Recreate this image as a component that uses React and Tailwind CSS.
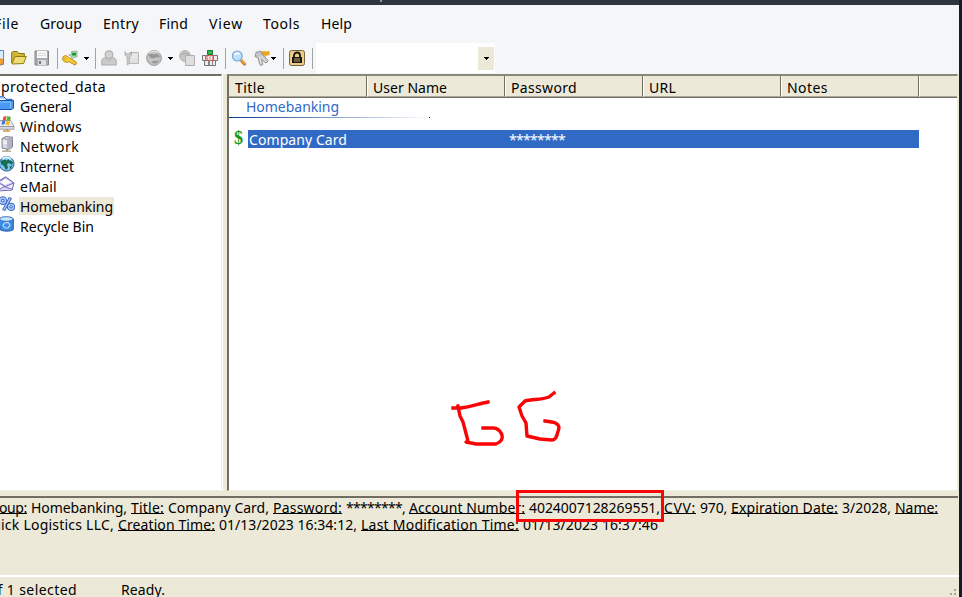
import { useLayoutEffect, useRef } from "react";

// Text run whose tracking is adjusted so that it fills its box exactly.
function Fit({ className = "", children }) {
  const box = useRef(null);
  const run = useRef(null);
  useLayoutEffect(() => {
    const natural = run.current.getBoundingClientRect().width;
    const target = box.current.getBoundingClientRect().width;
    const spacing = (target - natural) / children.length;
    run.current.style.letterSpacing = `${spacing}px`;
  }, [children]);
  return (
    <span ref={box} className={`block shrink-0 whitespace-nowrap ${className}`}>
      <span ref={run} className="inline">{children}</span>
    </span>
  );
}

const Svg = ({ children, className = "" }) => (
  <svg viewBox="0 0 16 16" className={`block h-4 w-4 shrink-0 ${className}`} fill="none">{children}</svg>
);
const Sep = ({ className = "" }) => <div className={`h-[21px] w-px shrink-0 bg-[#a2a3a5] ${className}`} />;
const Caret = ({ className = "" }) => (
  <svg viewBox="0 0 5 3" className={`block h-[3px] w-[5px] shrink-0 ${className}`}><path d="M0 0h5v1H4v1H3v1H2V2H1V1H0z" fill="#000" /></svg>
);

const NewIcon = () => (
  <Svg className="-ml-3"><path d="M2 .5h13.5v14H2z" fill="#d9ecff" stroke="#4e8ed0" /><path d="m12 8 1 2 2-1-1 3 2 1-3 1-1 2-1-3-3-1 3-1z" fill="#f4a52c" stroke="#d87818" strokeWidth=".7" /></Svg>
);
const OpenIcon = () => (
  <Svg className="ml-[7px]"><path d="M.7 13.2V2.5l1.5-1h4l1.6 2h5.5v3" fill="#d0b735" stroke="#8b7412" /><path d="m1 14 3-7.5h11.3l-2.7 7z" fill="#f0dd72" stroke="#927b17" /></Svg>
);
const SaveIcon = () => (
  <Svg className="ml-[7px]"><path d="M1 1h13.5v14H1z" fill="#a9abad" stroke="#858789" /><path d="M3 1h10v7H3z" fill="#f7f7f7" /><path d="M4 10h8v5H4z" fill="#dedfe0" /><path d="M5 11h2v3H5z" fill="#77797b" /><path d="M4 3.5h8M4 5.5h8" stroke="#ddd" /></Svg>
);
const AddKeyIcon = () => (
  <Svg className="ml-[4px]"><path d="M1 6.8C2.3 5.2 5 5.2 6.2 7.2l8 4.8v2.2l-2.3.8-1.3-2-1.4.2-1-1.5-1.8.2C4.7 12.6 1.4 12.2.7 9.6z" fill="#f8d22c" stroke="#c38716" /><circle cx="3" cy="8.6" r="1" fill="#fff2a0" stroke="#b27811" strokeWidth=".6" /><path d="M9.5 1.5 15 1v6h-2.4L10 9.5l-.3-2.6L6.8 5l2.7-1z" fill="#a9dcb3" stroke="#8cab91" strokeWidth=".8" /><path d="M10 2.8h4v2.7h-4z" fill="#1b9a3d" /></Svg>
);
const UserIcon = () => (
  <Svg className="ml-[5px]"><path d="M.8 15v-4C.8 8.8 2.4 8 4.5 7.6h7c2.1.4 3.7 1.2 3.7 3.4v4z" fill="#cbcbcb" stroke="#aaa" /><circle cx="8" cy="4.6" r="4" fill="#d1d1d1" stroke="#aaa" /><path d="m5 9 3 2 3-2" stroke="#b8b8b8" /></Svg>
);
const NoteKeyIcon = () => (
  <Svg className="ml-[7px]"><path d="M5.5 2.5h9v11h-9z" fill="#e1e1e1" stroke="#b8b8b8" /><path d="M1 1.5V5l2.2 2.2V15l2-1.5v-6L7.5 5V1.5L6 4H2.5z" fill="#cfcfcf" stroke="#b0b0b0" /><path d="M8 5h5M8 7h5" stroke="#eee" /></Svg>
);
const GreyGlobe = () => (
  <Svg className="ml-[6px]"><circle cx="8" cy="8" r="7.4" fill="#bfbfbf" stroke="#a0a0a0" /><path d="M2 5 5 3.5l3 1 3-1 3 3-2 1-2-.5-2 1.5-3-.5L3.5 6.5zm4 6 4-1 3 .5-2 2.5-4 .5z" fill="#969696" /><path d="M3.5 3C6 1 10 1 12.5 3" stroke="#e2e2e2" strokeWidth="1.4" /><path d="M3 10h9" stroke="#d4d4d4" /></Svg>
);
const CopyIcon = () => (
  <Svg className="ml-[6px]"><circle cx="6" cy="6" r="5.4" fill="#c5c5c5" stroke="#b0b0b0" /><path d="m2 5 3-2 4 1 2 2" stroke="#a5a5a5" /><path d="M6.5 5.5h9v10h-9z" fill="#dedede" stroke="#b0b0b0" /></Svg>
);
const GridIcon = () => (
  <Svg className="ml-[7px]"><path d="M.5 5.5h15v5H.5zM2.5 10.5h11v5h-11z" fill="#eee" stroke="#777" /><path d="M3.5 5.5v5m4-5v10m4-10v5m-5 0v5m4-5v5" stroke="#858585" /><path d="M5 5.5h6v5H5z" fill="#f7dddd" stroke="#e34a4a" /><path d="M5.5.5h5v4h-5z" fill="#35b64d" stroke="#128029" /><path d="M8 5v6" stroke="#aaa" /></Svg>
);
const FindIcon = () => (
  <Svg className="ml-[5px]"><path d="m10 10 3.5 4" stroke="#c57a31" strokeWidth="3.2" strokeLinecap="round" /><path d="m10 9.5 4 4" stroke="#ffb14b" strokeWidth="1.5" /><circle cx="6.3" cy="6" r="4.9" fill="#bde1fb" stroke="#7fadd9" strokeWidth="1.3" /><path d="M3.5 5c1-2 3-2 5-1" stroke="#fff" strokeWidth="1.8" /></Svg>
);
const KeysIcon = () => (
  <Svg className="ml-[7px]"><path d="M5 2.3h9.5v2h-2l-1 1-1-1H7" stroke="#e7a820" strokeWidth="2.1" /><path d="M2 2.5 6.5 1 8 4l6 6.5-1 2-2 .2L7.5 9l1.3 5.5-2 1L5.5 14 4.3 8 1 6.5z" fill="#c9c9c9" stroke="#8c8c8c" strokeWidth=".9" /><circle cx="3.8" cy="4.5" r="1.2" fill="#fff" stroke="#8c8c8c" strokeWidth=".6" /><path d="m5.5 7 1.6 6.5M7 6.5l5 5" stroke="#f2f2f2" strokeWidth=".8" /></Svg>
);
const LockIcon = () => (
  <Svg className="ml-[5px]"><rect x=".5" y=".5" width="15" height="15" rx="2" fill="#edcc83" stroke="#776342" /><path d="M5 7V5.5a3 3 0 0 1 6 0V7" stroke="#171717" strokeWidth="1.8" /><path d="M3 7h10v6H3z" fill="#171717" /><path d="M5 9h6M5 11h6" stroke="#d9b66c" strokeWidth=".9" /></Svg>
);

const treeIcons = {
  folder: <><path d="M-1 2.5V.8h6l2 2.5h6V5" fill="#c3e1ff" stroke="#1d57ba" /><path d="M-1 4.5h15.5V12L13 13.5H-1z" fill="#4a9af5" stroke="#1553b8" /><path d="M0 6h11.5v6" stroke="#8cc2ff" /></>,
  windows: <><path d="M1.5 4.5h10l3.5 6H-2z" fill="#eeeef3" stroke="#9b9ba9" /><path d="M-2 10.5h17v2.8H-2z" fill="#d6d7e0" stroke="#8a8a98" strokeWidth=".7" /><path d="M8 13v1.5" stroke="#999" strokeWidth="2" /><path d="M4 15h7" stroke="#d79d45" strokeWidth="1.6" /><path d="m4.5.8 3-.8-.8 4-3.2.7z" fill="#e5482d" /><path d="m8.3 0 3.7 1-1 4-3.6-1z" fill="#55b53c" /><path d="m3.2 5.2 3.2-.6-.8 3.6-3.2.6z" fill="#3975e2" /><path d="m7.2 4.8 3.8 1-1 3.8-3.6-1z" fill="#efbd24" /></>,
  network: <><path d="m3 2.5 4-2 6.5.7v10L9.5 13.5 3 12z" fill="#d6d8e1" stroke="#85889a" /><path d="m3 2.5 6 .7 4.5-2M9 3.2v10" stroke="#9598a8" /><path d="m9.5 3.8 3.5-1.6v8.5l-3.5 2z" fill="#aeb1bf" /><path d="m4 5 4 .6M4 7l4 .6" stroke="#fff" /><path d="M8 13v2" stroke="#999" strokeWidth="2" /><path d="M3 15.2h9" stroke="#b7ab94" strokeWidth="1.5" /></>,
  globe: <><circle cx="7.7" cy="7.8" r="7.3" fill="#7cc4ec" stroke="#315a9b" /><path d="m1.5 5 4-1.5 2 1 2-1 4.5 2.5-1 3-3-2-2 1 1 4-2 2-2-4-3-2zm9 5.5 3-1-2 4z" fill="#166c54" /><path d="M3.5 3C6 1 9.5 1 12 3" stroke="#dcf6ff" strokeWidth="2" /></>,
  mail: <><path d="M-1 5.5 6.5 1 15 7l-2 7-14 1z" fill="#f2f1ff" stroke="#6662b3" /><path d="m-1 14.5 6-4 8.5 3" fill="#dddcf6" stroke="#6e69b6" /><path d="M-1 6.5 6.5 1 15 7l-8.5 3.5z" fill="#cfcdf3" stroke="#6e69b6" /><path d="m1 6 6-3 5 3.5-6 2.5z" fill="#fff" /></>,
  percent: <><circle cx="3.8" cy="4.6" r="2.6" stroke="#3e6ac4" strokeWidth="3.6" /><circle cx="12" cy="10.8" r="2.4" stroke="#3e6ac4" strokeWidth="3.4" /><path d="m11.5 1.5-7 13" stroke="#3e6ac4" strokeWidth="3.4" /><circle cx="3.8" cy="4.6" r="2.6" stroke="#a9c7fb" strokeWidth="1.6" /><circle cx="12" cy="10.8" r="2.4" stroke="#a9c7fb" strokeWidth="1.5" /><path d="m11.2 2-6.5 12" stroke="#a9c7fb" strokeWidth="1.4" /></>,
  bin: <><path d="M0 3h14.3v10.5c-2 2.2-11 2.2-13.3 0z" fill="#3c8be0" stroke="#245aa7" /><ellipse cx="7.3" cy="3" rx="6.8" ry="2.3" fill="#c9e5fb" stroke="#326cbd" /><path d="m5.5 7 3.5-.5L11 9l-2 3H6L4 9.5z" stroke="#bfe0ff" strokeWidth="1.2" /></>,
};

const tree = [
  ["General", "folder", "w-[52px]"],
  ["Windows", "windows", "w-[62px]"],
  ["Network", "network", "w-[59px]"],
  ["Internet", "globe", "w-[54px]"],
  ["eMail", "mail", "w-[37px]"],
  ["Homebanking", "percent", "w-[93px]"],
  ["Recycle Bin", "bin", "w-[74px]"],
];

const columns = [
  ["Title", "w-[30px]"],
  ["User Name", "w-[74px]"],
  ["Password", "w-[66px]"],
  ["URL", "w-[27px]"],
  ["Notes", "w-[41px]"],
];

const u = "underline decoration-1 underline-offset-0 [text-decoration-skip-ink:none]";

export default function App() {
  return (
    <div className="relative flex h-[597px] w-[962px] flex-col overflow-hidden bg-[#ece9d8] font-['Noto_Sans',sans-serif] text-[14px] leading-5 text-black">
      <div className="flex h-[5px] shrink-0 bg-[#2f343f] pl-[380px]"><div className="h-[2px] w-[2px] bg-[#8795a5]" /></div>

      <nav className="flex h-[38px] shrink-0 bg-[#f5f6f7] pt-[9px]">
        <Fit className="-ml-[6px] w-[25px]">File</Fit>
        <Fit className="ml-[21px] w-[42px]">Group</Fit>
        <Fit className="ml-[21px] w-[36px]">Entry</Fit>
        <Fit className="ml-[20px] w-[29px]">Find</Fit>
        <Fit className="ml-[21px] w-[34px]">View</Fit>
        <Fit className="ml-[20px] w-[37px]">Tools</Fit>
        <Fit className="ml-[21px] w-[31px]">Help</Fit>
      </nav>

      <div className="flex h-[31px] shrink-0 items-center bg-[#f5f6f7] pb-px">
        <NewIcon /><OpenIcon /><SaveIcon />
        <Sep className="ml-[7px]" />
        <AddKeyIcon /><Caret className="ml-[6px]" />
        <Sep className="ml-[6px]" />
        <UserIcon /><NoteKeyIcon /><GreyGlobe /><Caret className="ml-[6px]" /><CopyIcon /><GridIcon />
        <Sep className="ml-[7px]" />
        <FindIcon /><KeysIcon /><Caret className="ml-[1px]" />
        <Sep className="ml-[7px]" />
        <LockIcon />
        <Sep className="ml-[7px]" />
        <div className="ml-[3px] flex h-[30px] w-[179px] items-center justify-end self-start bg-white pr-px">
          <div className="flex h-[23px] w-4 items-center justify-center bg-[#ece9d8]"><Caret /></div>
        </div>
      </div>

      <div className="flex h-[417px] shrink-0">
        <aside className="h-[417px] w-[222px] shrink-0 border-t-2 border-r border-b border-t-[#716f64] border-r-[#f1efe2] border-b-[#f1efe2] bg-white">
          <div className="h-5 pt-px"><Fit className="ml-px w-[105px]">protected_data</Fit></div>
          {tree.map(([name, icon, width]) => (
            <div key={name} className="flex h-5">
              <Svg className="-ml-px">{treeIcons[icon]}</Svg>
              <div className={`ml-1 mt-px flex h-[18px] px-px ${name === "Homebanking" ? "bg-[#ece9d8]" : ""}`}>
                <Fit className={width}>{name}</Fit>
              </div>
            </div>
          ))}
        </aside>
        <div className="w-[5px] shrink-0 border-l border-white bg-[#ece9d8]" />
        <main className="flex h-[417px] w-[731px] shrink-0 flex-col border-t-2 border-r border-b border-l-2 border-t-[#8b887a] border-r-[#ece9d8] border-b-[#f1efe2] border-l-[#716f64] bg-white">
          <div className="flex h-[22px] shrink-0 border-b border-[#716f64] bg-[#ece9d8]">
            {columns.map(([name, width], i) => (
              <div key={name} className={`flex h-[21px] shrink-0 border-r border-b border-r-[#716f64] border-b-[#aca899] pt-[2px] leading-[18px] ${i === 0 ? "w-[138px] pl-[6px]" : "w-[138px] border-l border-l-white pl-[5px]"}`}>
                <Fit className={`leading-5 ${width}`}>{name}</Fit>
              </div>
            ))}
            <div className="h-[21px] grow border-b border-l border-b-[#aca899] border-l-white" />
          </div>
          <div className="h-5 shrink-0 pl-[17px] text-[#316ac5]"><Fit className="-mt-px w-[93px]">Homebanking</Fit></div>
          <div className="-mt-px flex h-px shrink-0">
            <div className="h-px w-[200px] bg-linear-to-r from-[#003b85] to-white" />
            <div className="h-px w-px bg-[#223]" />
          </div>
          <div className="mt-3 flex h-[18px] shrink-0">
            <span className="w-[19px] shrink-0 pl-[5px] font-['Liberation_Serif',serif] text-[18px] leading-[17px] font-bold text-[#109a18]">$</span>
            <div className="flex w-[671px] bg-[#316ac5] pl-px text-white">
              <Fit className="w-[98px]">Company Card</Fit>
              <Fit className="ml-[162px] w-[56px]">********</Fit>
            </div>
          </div>
        </main>
      </div>

      <div className="mt-[5px] h-[79px] w-[958px] shrink-0 border-t-2 border-[#716f64] pt-px leading-[17px]">
        <div className="flex h-[17px] gap-1">
          <Fit className={`-ml-[16px] w-[43px] ${u}`}>Group:</Fit>
          <Fit className="w-[96px]">Homebanking,</Fit>
          <Fit className={`w-[33px] ${u}`}>Title:</Fit>
          <Fit className="w-[101px]">Company Card,</Fit>
          <Fit className={`w-[69px] ${u}`}>Password:</Fit>
          <Fit className="w-[59px]">********,</Fit>
          <Fit className={`w-[116px] ${u}`}>Account Number:</Fit>
          <Fit className="w-[131px]">4024007128269551,</Fit>
          <Fit className={`w-[32px] ${u}`}>CVV:</Fit>
          <Fit className="w-[27px]">970,</Fit>
          <Fit className={`w-[107px] ${u}`}>Expiration Date:</Fit>
          <Fit className="w-[49px]">3/2028,</Fit>
          <Fit className={`w-[43px] ${u}`}>Name:</Fit>
        </div>
        <div className="flex h-[17px] gap-1">
          <Fit className="-ml-[19px] w-[133px]">Quick Logistics LLC,</Fit>
          <Fit className={`w-[97px] ${u}`}>Creation Time:</Fit>
          <Fit className="w-[138px]">01/13/2023 16:34:12,</Fit>
          <Fit className={`w-[158px] ${u}`}>Last Modification Time:</Fit>
          <Fit className="w-[135px]">01/13/2023 16:37:46</Fit>
        </div>
      </div>

      <footer className="flex grow border-t-2 border-white pt-[3px]">
        <Fit className="-ml-[24px] w-[101px]">0 of 1 selected</Fit>
        <Fit className="ml-[44px] w-[44px]">Ready.</Fit>
        <svg viewBox="0 0 8 8" className="mt-[8px] ml-[784px] h-2 w-2 shrink-0"><path d="M5 1h2v2H5zM1 5h2v2H1zM5 5h2v2H5z" fill="#aaa696" /></svg>
      </footer>

      <div className="absolute top-0 right-0 h-full w-[3px] bg-[#141c28]" />
      <div className="absolute top-[490px] left-[516px] h-[32px] w-[148px] border-[3px] border-[#fa0505]" />
      <svg viewBox="0 0 140 75" className="absolute top-[380px] left-[440px] h-[75px] w-[140px]" fill="none" stroke="#fa0505" strokeWidth="3.4" strokeLinecap="square" strokeLinejoin="round">
        <path d="M13 28h8c9-1 17-4 27-6M18 26l2 10 3 6 5 19-2 1 10 2h20c5-2 7-5 6-9-2-5-5-7-9-7H43" />
        <path d="m114 13-5 4c-8 3-17 2-24 4l-6 6 3 9 4 7 1 13 13 3 12 1c5 0 5-6 7-12 0-5-5-6-14-7" />
      </svg>
    </div>
  );
}
